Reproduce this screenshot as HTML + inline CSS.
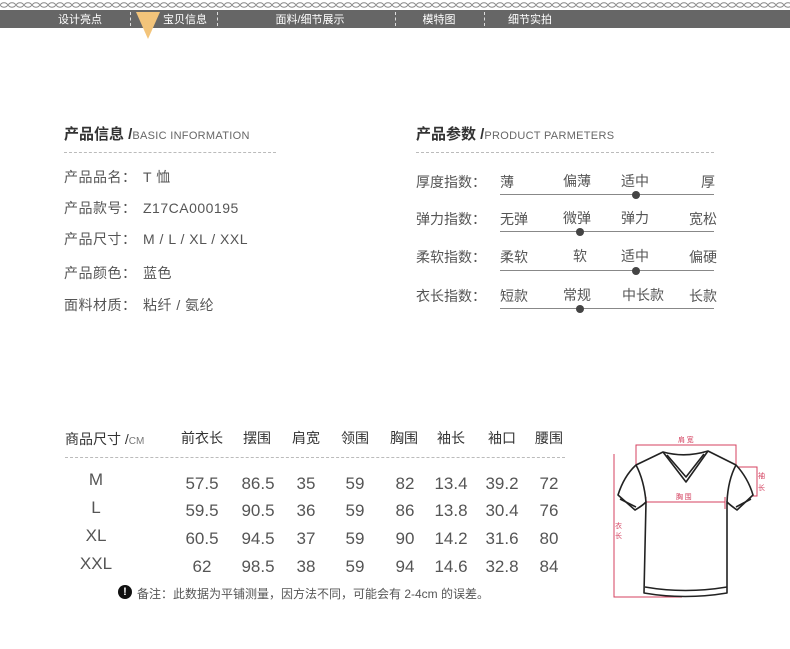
<!DOCTYPE html>
<html><head><meta charset="utf-8"><style>
body{margin:0;width:790px;height:649px;background:#fff;position:relative;overflow:hidden;font-family:"Liberation Sans","Noto Sans CJK SC",sans-serif;color:#555}
.a{position:absolute;white-space:nowrap}
.c{position:absolute;white-space:nowrap;transform:translate(-50%,-50%)}
.bar{position:absolute;left:0;top:10px;width:790px;height:18px;background:#666}
.nav{color:#fff;font-size:11px;top:19px}
.sep{position:absolute;top:12px;height:14px;border-left:1px dashed #ddd}
.h{font-size:15px;color:#333;font-weight:bold}
.h small{font-size:11px;color:#666;font-weight:normal;letter-spacing:.3px}
.dl{position:absolute;border-top:1px dashed #bbb;height:0}
.t{font-size:14px;color:#555;letter-spacing:.5px}
.t b{display:inline-block;width:79px;font-weight:normal}
.r{font-size:14px;color:#555}
.line{position:absolute;height:1px;background:#888}
.dot{position:absolute;width:8px;height:8px;border-radius:50%;background:#444}
.th{font-size:14px;color:#333}
.n{font-size:17px;color:#555}
</style></head><body>
<svg class="a" style="left:0;top:0" width="790" height="10"><defs><pattern id="p" width="8" height="10" patternUnits="userSpaceOnUse"><ellipse cx="4" cy="5" rx="3.5" ry="2.2" fill="none" stroke="#888" stroke-width="1"/></pattern></defs><rect width="790" height="10" fill="url(#p)"/></svg>
<div class="bar"></div>
<div class="c nav" style="left:80px">设计亮点</div>
<div class="sep" style="left:130px"></div>
<svg class="a" style="left:136px;top:12px" width="24" height="28"><polygon points="0,0 24,0 12,27" fill="#f3c47a"/></svg>
<div class="c nav" style="left:185px">宝贝信息</div>
<div class="sep" style="left:217px"></div>
<div class="c nav" style="left:310px">面料/细节展示</div>
<div class="sep" style="left:395px"></div>
<div class="c nav" style="left:439px">模特图</div>
<div class="sep" style="left:484px"></div>
<div class="c nav" style="left:530px">细节实拍</div>

<div class="a h" style="left:64px;top:123px">产品信息 /<small>BASIC INFORMATION</small></div>
<div class="dl" style="left:64px;top:152px;width:212px"></div>
<div class="a t" style="left:64px;top:167px"><b>产品品名：</b>T 恤</div>
<div class="a t" style="left:64px;top:198px"><b>产品款号：</b>Z17CA000195</div>
<div class="a t" style="left:64px;top:229px"><b>产品尺寸：</b>M / L / XL / XXL</div>
<div class="a t" style="left:64px;top:263px"><b>产品颜色：</b>蓝色</div>
<div class="a t" style="left:64px;top:295px"><b>面料材质：</b>粘纤 / 氨纶</div>

<div class="a h" style="left:416px;top:123px">产品参数 /<small>PRODUCT PARMETERS</small></div>
<div class="dl" style="left:416px;top:152px;width:298px"></div>

<div class="a r" style="left:416px;top:172px">厚度指数：</div>
<div class="a r" style="left:500px;top:172px">薄</div><div class="c r" style="left:577px;top:181px">偏薄</div><div class="c r" style="left:635px;top:181px">适中</div><div class="a r" style="left:701px;top:172px">厚</div>
<div class="line" style="left:500px;top:194px;width:214px"></div><div class="dot" style="left:632px;top:191px"></div>

<div class="a r" style="left:416px;top:209px">弹力指数：</div>
<div class="a r" style="left:500px;top:209px">无弹</div><div class="c r" style="left:577px;top:218px">微弹</div><div class="c r" style="left:635px;top:218px">弹力</div><div class="a r" style="left:689px;top:209px">宽松</div>
<div class="line" style="left:500px;top:231px;width:214px"></div><div class="dot" style="left:576px;top:228px"></div>

<div class="a r" style="left:416px;top:247px">柔软指数：</div>
<div class="a r" style="left:500px;top:247px">柔软</div><div class="c r" style="left:580px;top:256px">软</div><div class="c r" style="left:635px;top:256px">适中</div><div class="a r" style="left:689px;top:247px">偏硬</div>
<div class="line" style="left:500px;top:270px;width:214px"></div><div class="dot" style="left:632px;top:267px"></div>

<div class="a r" style="left:416px;top:286px">衣长指数：</div>
<div class="a r" style="left:500px;top:286px">短款</div><div class="c r" style="left:577px;top:295px">常规</div><div class="c r" style="left:643px;top:295px">中长款</div><div class="a r" style="left:689px;top:286px">长款</div>
<div class="line" style="left:500px;top:308px;width:214px"></div><div class="dot" style="left:576px;top:305px"></div>

<div class="a th" style="left:65px;top:429px">商品尺寸 /<span style="font-size:10px;color:#777">CM</span></div>
<div class="c th" style="left:202px;top:438px">前衣长</div>
<div class="c th" style="left:257px;top:438px">摆围</div>
<div class="c th" style="left:306px;top:438px">肩宽</div>
<div class="c th" style="left:355px;top:438px">领围</div>
<div class="c th" style="left:404px;top:438px">胸围</div>
<div class="c th" style="left:451px;top:438px">袖长</div>
<div class="c th" style="left:502px;top:438px">袖口</div>
<div class="c th" style="left:549px;top:438px">腰围</div>
<div class="dl" style="left:65px;top:457px;width:500px"></div>

<div class="c n" style="left:96px;top:480px">M</div>
<div class="c n" style="left:96px;top:508px">L</div>
<div class="c n" style="left:96px;top:536px">XL</div>
<div class="c n" style="left:96px;top:564px">XXL</div>

<div class="c n" style="left:202px;top:484px">57.5</div><div class="c n" style="left:258px;top:484px">86.5</div><div class="c n" style="left:306px;top:484px">35</div><div class="c n" style="left:355px;top:484px">59</div><div class="c n" style="left:405px;top:484px">82</div><div class="c n" style="left:451px;top:484px">13.4</div><div class="c n" style="left:502px;top:484px">39.2</div><div class="c n" style="left:549px;top:484px">72</div>
<div class="c n" style="left:202px;top:511px">59.5</div><div class="c n" style="left:258px;top:511px">90.5</div><div class="c n" style="left:306px;top:511px">36</div><div class="c n" style="left:355px;top:511px">59</div><div class="c n" style="left:405px;top:511px">86</div><div class="c n" style="left:451px;top:511px">13.8</div><div class="c n" style="left:502px;top:511px">30.4</div><div class="c n" style="left:549px;top:511px">76</div>
<div class="c n" style="left:202px;top:539px">60.5</div><div class="c n" style="left:258px;top:539px">94.5</div><div class="c n" style="left:306px;top:539px">37</div><div class="c n" style="left:355px;top:539px">59</div><div class="c n" style="left:405px;top:539px">90</div><div class="c n" style="left:451px;top:539px">14.2</div><div class="c n" style="left:502px;top:539px">31.6</div><div class="c n" style="left:549px;top:539px">80</div>
<div class="c n" style="left:202px;top:567px">62</div><div class="c n" style="left:258px;top:567px">98.5</div><div class="c n" style="left:306px;top:567px">38</div><div class="c n" style="left:355px;top:567px">59</div><div class="c n" style="left:405px;top:567px">94</div><div class="c n" style="left:451px;top:567px">14.6</div><div class="c n" style="left:502px;top:567px">32.8</div><div class="c n" style="left:549px;top:567px">84</div>

<div class="a" style="left:118px;top:585px;width:14px;height:14px;border-radius:50%;background:#111;color:#fff;font-size:11px;font-weight:bold;text-align:center;line-height:14px">!</div>
<div class="a" style="left:137px;top:585px;font-size:12px;color:#555">备注：此数据为平铺测量，因方法不同，可能会有 2-4cm 的误差。</div>

<svg class="a" style="left:600px;top:420px" width="180" height="190" viewBox="0 0 180 190">
<g fill="none" stroke="#d4405f" stroke-width="1">
<polyline points="36,45 36,25 136,25 136,45"/>
<polyline points="14,34 14,177 82,177"/>
<polyline points="137,47 157,47 157,76 152,76"/>
<line x1="46" y1="82" x2="125" y2="82"/>
<line x1="46" y1="77" x2="46" y2="89"/><line x1="125" y1="77" x2="125" y2="89"/>
</g>
<g fill="#d4405f" font-size="7" font-family="Noto Sans CJK SC,sans-serif">
<text x="78" y="22">肩 宽</text><text x="76" y="79">胸 围</text>
<text x="15" y="108">衣</text><text x="15" y="118">长</text>
<text x="158" y="58">袖</text><text x="158" y="70">长</text>
</g>
<g fill="none" stroke="#222" stroke-width="1.6" stroke-linejoin="round">
<path d="M63,32 Q85,38 108,31 L136,45 Q148,58 153,75 L137,90 Q130,85 127,82 L127,173 Q85,180 44,173 L46,82 Q42,86 35,90 L18,75 Q24,56 36,45 Z"/>
<path d="M63,32 L86,62 L108,31"/>
<path d="M67,35 L86,57 L104,34"/>
<path d="M20,79 L36,87 M151,79 L136,87"/>
<path d="M45,167 Q85,174 127,167"/>
<path d="M36,45 Q44,60 46,82 M136,45 Q128,60 127,82"/>
</g>
</svg>
</body></html>
